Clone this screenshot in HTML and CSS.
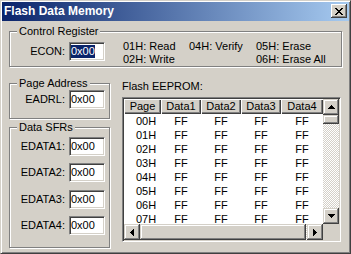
FILE: index.html
```html
<!DOCTYPE html>
<html>
<head>
<meta charset="utf-8">
<link rel="stylesheet" href="styles.css">
</head>
<body>
<div class="window">
  <div class="titlebar">
    <span class="title">Flash Data Memory</span>
    <button class="close" type="button">
      <svg width="8" height="7" viewBox="0 0 8 7" shape-rendering="crispEdges"><path fill="#000" d="M0 0h2v1H0zM6 0h2v1H6zM1 1h2v1H1zM5 1h2v1H5zM2 2h4v1H2zM3 3h2v1H3zM2 4h4v1H2zM1 5h2v1H1zM5 5h2v1H5zM0 6h2v1H0zM6 6h2v1H6z"/></svg>
    </button>
  </div>
  <div class="client">
    <fieldset class="group group-control">
      <legend>Control Register</legend>
      <div class="control-row">
        <span class="lbl">ECON:</span>
        <span class="field"><span class="sel">0x00</span></span>
        <div class="codes">
          <span>01H: Read</span><span>04H: Verify</span><span>05H: Erase</span>
          <span>02H: Write</span><span></span><span>06H: Erase All</span>
        </div>
      </div>
    </fieldset>
    <div class="lower">
      <div class="left">
        <fieldset class="group group-page">
          <legend>Page Address</legend>
          <div class="frow"><span class="lbl">EADRL:</span><span class="field">0x00</span></div>
        </fieldset>
        <fieldset class="group group-data">
          <legend>Data SFRs</legend>
          <div class="frows">
            <div class="frow"><span class="lbl">EDATA1:</span><span class="field">0x00</span></div>
            <div class="frow"><span class="lbl">EDATA2:</span><span class="field">0x00</span></div>
            <div class="frow"><span class="lbl">EDATA3:</span><span class="field">0x00</span></div>
            <div class="frow"><span class="lbl">EDATA4:</span><span class="field">0x00</span></div>
          </div>
        </fieldset>
      </div>
      <div class="right">
        <div class="eeprom-label">Flash EEPROM:</div>
        <div class="listview">
          <div class="lv-main">
            <div class="lv-row lv-header">
              <span class="hcell">Page</span><span class="hcell">Data1</span><span class="hcell">Data2</span><span class="hcell">Data3</span><span class="hcell">Data4</span>
            </div>
            <div class="lv-row"><span>00H</span><span>FF</span><span>FF</span><span>FF</span><span>FF</span></div>
            <div class="lv-row"><span>01H</span><span>FF</span><span>FF</span><span>FF</span><span>FF</span></div>
            <div class="lv-row"><span>02H</span><span>FF</span><span>FF</span><span>FF</span><span>FF</span></div>
            <div class="lv-row"><span>03H</span><span>FF</span><span>FF</span><span>FF</span><span>FF</span></div>
            <div class="lv-row"><span>04H</span><span>FF</span><span>FF</span><span>FF</span><span>FF</span></div>
            <div class="lv-row"><span>05H</span><span>FF</span><span>FF</span><span>FF</span><span>FF</span></div>
            <div class="lv-row"><span>06H</span><span>FF</span><span>FF</span><span>FF</span><span>FF</span></div>
            <div class="lv-row"><span>07H</span><span>FF</span><span>FF</span><span>FF</span><span>FF</span></div>
          </div>
          <div class="vscroll">
            <span class="sbtn"><svg width="7" height="4" viewBox="0 0 7 4" shape-rendering="crispEdges"><path d="M3 0h1v1H3zM2 1h3v1H2zM1 2h5v1H1zM0 3h7v1H0z"/></svg></span>
            <span class="thumb thumb-v"></span>
            <span class="track"></span>
            <span class="sbtn"><svg width="7" height="4" viewBox="0 0 7 4" shape-rendering="crispEdges"><path d="M0 0h7v1H0zM1 1h5v1H1zM2 2h3v1H2zM3 3h1v1H3z"/></svg></span>
          </div>
          <div class="hscroll">
            <span class="sbtn"><svg width="4" height="7" viewBox="0 0 4 7" shape-rendering="crispEdges"><path d="M0 3h1v1H0zM1 2h1v3H1zM2 1h1v5H2zM3 0h1v7H3z"/></svg></span>
            <span class="thumb thumb-h"></span>
            <span class="track"></span>
            <span class="sbtn"><svg width="4" height="7" viewBox="0 0 4 7" shape-rendering="crispEdges"><path d="M0 0h1v7H0zM1 1h1v5H1zM2 2h1v3H2zM3 3h1v1H3z"/></svg></span>
          </div>
          <div class="corner"></div>
        </div>
      </div>
    </div>
  </div>
</div>
</body>
</html>
```
FILE: styles.css
```css
* { box-sizing: border-box; }
html, body { margin: 0; padding: 0; background: #d4d0c8; }
body {
  font-family: "Liberation Sans", Arial, sans-serif;
  font-size: 11px;
  line-height: 13px;
  color: #000;
}
.window {
  width: 351px;
  height: 254px;
  padding: 1px;
  background: #d4d0c8;
  border: 1px solid;
  border-color: #d4d0c8 #404040 #404040 #d4d0c8;
  box-shadow: inset 1px 1px 0 #fff, inset -1px -1px 0 #808080;
  overflow: hidden;
}
.titlebar {
  height: 19px;
  display: flex;
  justify-content: space-between;
  align-items: flex-start;
  padding: 0 2px 0 2px;
  background: linear-gradient(to right, #0a246a, #a6caf0);
}
.title {
  color: #fff;
  font-weight: bold;
  font-size: 12px;
  line-height: 19px;
}
.close {
  margin-top: 2px;
  width: 16px;
  height: 14px;
  padding: 0;
  border: none;
  background: #d4d0c8;
  box-shadow: inset -1px -1px 0 #404040, inset 1px 1px 0 #fff, inset -2px -2px 0 #808080;
  display: flex;
  align-items: center;
  justify-content: center;
}
.close svg { display: block; }
.client {
  padding: 4px 7px 0 7px;
}
.group {
  margin: 0;
  padding: 0;
  min-width: 0;
  border: 1px solid #808080;
  box-shadow: inset 1px 1px 0 #fff, 1px 1px 0 #fff;
}
.group legend {
  margin-left: 7px;
  padding: 0 2px;
  line-height: 13px;
  background: #d4d0c8;
}
.group-control {
  padding: 4px 0 5px 0;
}
.control-row {
  display: flex;
  align-items: center;
  height: 19px;
}
.lbl {
  width: 55px;
  text-align: right;
  flex: none;
}
.field {
  flex: none;
  display: flex;
  align-items: center;
  width: 36px;
  height: 19px;
  margin-left: 4px;
  padding-left: 1px;
  background: #fff;
  border: 1px solid;
  border-color: #808080 #fff #fff #808080;
  box-shadow: inset 1px 1px 0 #404040, inset -1px -1px 0 #d4d0c8;
  overflow: hidden;
  white-space: nowrap;
}
.sel {
  background: #0a246a;
  color: #fff;
}
.codes {
  align-self: flex-start;
  margin-top: -2px;
  margin-left: 18px;
  display: grid;
  grid-template-columns: 66px 67px auto;
  line-height: 13px;
  height: 19px;
  white-space: nowrap;
}
.lower {
  margin-top: 10px;
  display: grid;
  grid-template-columns: 101px 219px;
  column-gap: 12px;
}
.left {
  display: flex;
  flex-direction: column;
}
.group-page {
  padding: 0 0 9px 0;
}
.group-data {
  margin-top: 2px;
  padding: 3px 0 12px 0;
}
.frow {
  display: flex;
  align-items: center;
  height: 19px;
}
.frows {
  display: flex;
  flex-direction: column;
  row-gap: 7.34px;
}
.eeprom-label {
  margin-top: 3px;
  line-height: 13px;
}
.listview {
  margin-top: 4px;
  width: 219px;
  height: 145px;
  border: 1px solid;
  border-color: #808080 #fff #fff #808080;
  box-shadow: inset 1px 1px 0 #404040, inset -1px -1px 0 #d4d0c8;
  padding: 1px;
  display: grid;
  grid-template-columns: 199px 16px;
  grid-template-rows: 125px 16px;
  background: #d4d0c8;
}
.lv-main {
  background: #fff;
  overflow: hidden;
}
.lv-row {
  display: grid;
  grid-template-columns: 37px 40px 40px 40px 42px;
  height: 14px;
  line-height: 14px;
  text-align: center;
  white-space: nowrap;
}
.lv-row > span:first-child {
  text-align: left;
  padding-left: 12px;
}
.lv-header {
  height: 15px;
  line-height: 15px;
}
.hcell {
  background: #d4d0c8;
  box-shadow: inset 1px 1px 0 #fff, inset -1px -1px 0 #404040, inset -2px -2px 0 #808080;
}
.lv-header > .hcell:first-child {
  text-align: center;
  padding-left: 0;
}
.vscroll {
  display: flex;
  flex-direction: column;
}
.hscroll {
  display: flex;
}
.sbtn {
  flex: none;
  width: 16px;
  height: 16px;
  background: #d4d0c8;
  box-shadow: inset -1px -1px 0 #404040, inset 1px 1px 0 #d4d0c8, inset -2px -2px 0 #808080, inset 2px 2px 0 #fff;
  display: flex;
  align-items: center;
  justify-content: center;
}
.sbtn svg { display: block; fill: #000; }
.thumb {
  flex: none;
  background: #d4d0c8;
  box-shadow: inset -1px -1px 0 #404040, inset 1px 1px 0 #d4d0c8, inset -2px -2px 0 #808080, inset 2px 2px 0 #fff;
}
.thumb-v { width: 16px; height: 9px; }
.thumb-h { width: 166px; height: 16px; }
.track {
  flex: 1;
  background: repeating-conic-gradient(#fff 0 25%, #d4d0c8 0 50%) 0 0 / 2px 2px;
}
.corner { background: #d4d0c8; }
```
